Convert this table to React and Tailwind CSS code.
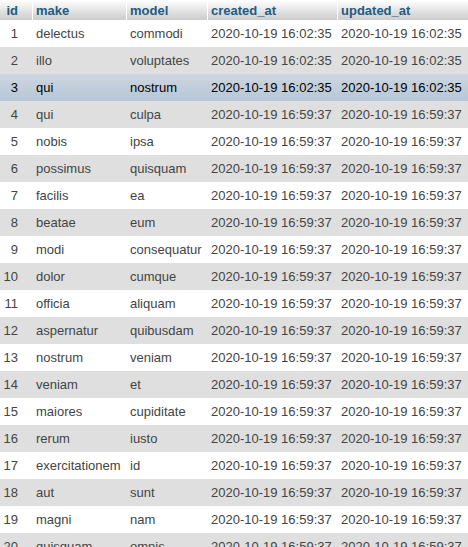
const rows = [
  [1, "delectus", "commodi", "2020-10-19 16:02:35", "2020-10-19 16:02:35"],
  [2, "illo", "voluptates", "2020-10-19 16:02:35", "2020-10-19 16:02:35"],
  [3, "qui", "nostrum", "2020-10-19 16:02:35", "2020-10-19 16:02:35"],
  [4, "qui", "culpa", "2020-10-19 16:59:37", "2020-10-19 16:59:37"],
  [5, "nobis", "ipsa", "2020-10-19 16:59:37", "2020-10-19 16:59:37"],
  [6, "possimus", "quisquam", "2020-10-19 16:59:37", "2020-10-19 16:59:37"],
  [7, "facilis", "ea", "2020-10-19 16:59:37", "2020-10-19 16:59:37"],
  [8, "beatae", "eum", "2020-10-19 16:59:37", "2020-10-19 16:59:37"],
  [9, "modi", "consequatur", "2020-10-19 16:59:37", "2020-10-19 16:59:37"],
  [10, "dolor", "cumque", "2020-10-19 16:59:37", "2020-10-19 16:59:37"],
  [11, "officia", "aliquam", "2020-10-19 16:59:37", "2020-10-19 16:59:37"],
  [12, "aspernatur", "quibusdam", "2020-10-19 16:59:37", "2020-10-19 16:59:37"],
  [13, "nostrum", "veniam", "2020-10-19 16:59:37", "2020-10-19 16:59:37"],
  [14, "veniam", "et", "2020-10-19 16:59:37", "2020-10-19 16:59:37"],
  [15, "maiores", "cupiditate", "2020-10-19 16:59:37", "2020-10-19 16:59:37"],
  [16, "rerum", "iusto", "2020-10-19 16:59:37", "2020-10-19 16:59:37"],
  [17, "exercitationem", "id", "2020-10-19 16:59:37", "2020-10-19 16:59:37"],
  [18, "aut", "sunt", "2020-10-19 16:59:37", "2020-10-19 16:59:37"],
  [19, "magni", "nam", "2020-10-19 16:59:37", "2020-10-19 16:59:37"],
  [20, "quisquam", "omnis", "2020-10-19 16:59:37", "2020-10-19 16:59:37"],
];

const cols = "grid grid-cols-[32px_94px_81px_130px_131px]";

function Th({ children, first }) {
  return (
    <div
      className={
        "h-[20px] flex items-center whitespace-nowrap font-bold text-[#235a81] bg-gradient-to-b from-white to-[#cccccc] " +
        (first ? "justify-end pr-[14px]" : "border-l border-white pl-[3px]")
      }
    >
      {children}
    </div>
  );
}

export default function App() {
  return (
    <div className="w-[468px] h-[547px] overflow-hidden bg-white font-['Liberation_Sans',Arial,sans-serif] text-[13px] leading-[15px]">
      <div className={cols}>
        <Th first>id</Th>
        <Th>make</Th>
        <Th>model</Th>
        <Th>created_at</Th>
        <Th>updated_at</Th>
      </div>
      {rows.map((r, i) => {
        const marked = r[0] === 3;
        const bg = marked
          ? "bg-gradient-to-b from-[#ced6df] to-[#b6c6d7] text-black"
          : i % 2 === 0
          ? "bg-white text-[#444444]"
          : "bg-[#dfdfdf] text-[#444444]";
        return (
          <div key={r[0]} className={cols + " h-[27px] items-center " + bg}>
            <div className="text-right pr-[14px] whitespace-nowrap">{r[0]}</div>
            <div className="pl-[4px] whitespace-nowrap">{r[1]}</div>
            <div className="pl-[4px] whitespace-nowrap">{r[2]}</div>
            <div className="pl-[4px] whitespace-nowrap">{r[3]}</div>
            <div className="pl-[4px] whitespace-nowrap">{r[4]}</div>
          </div>
        );
      })}
    </div>
  );
}
